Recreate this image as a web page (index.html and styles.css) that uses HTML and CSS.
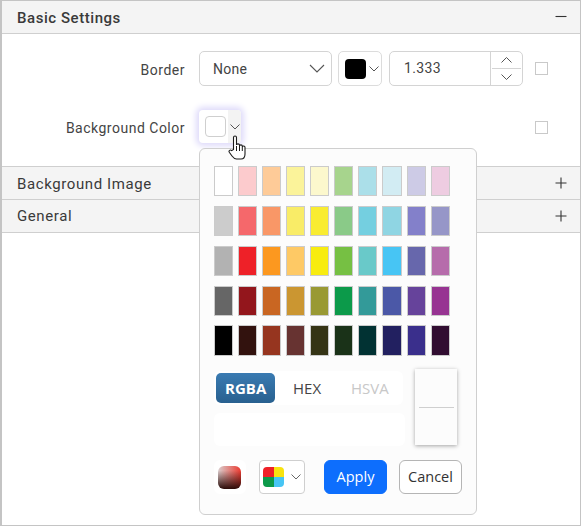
FILE: index.html
```html
<!DOCTYPE html>
<html lang="en">
<head>
<meta charset="utf-8">
<title>Basic Settings</title>
<link rel="stylesheet" href="styles.css">
</head>
<body>
<div class="frame">
  <div class="section-head open"><span class="head-text">Basic Settings</span><svg class="pm" width="12" height="12" viewBox="0 0 12 12"><path d="M.5 5.500h11" stroke="#333" stroke-width="1.100"/></svg></div>
  <div class="body-panel">
    <div class="row row-border">
      <label class="lbl">Border</label>
      <div class="select"><span>None</span><svg width="16" height="9" viewBox="0 0 16 9"><path d="M1 1l7 7 7-7" fill="none" stroke="#555" stroke-width="1.100"/></svg></div>
      <div class="color-pick"><span class="chip black"></span><svg width="10" height="6" viewBox="0 0 10 6"><path d="M.5.5 5 5 9.500.5" fill="none" stroke="#555"/></svg></div>
      <div class="num"><span class="num-val">1.333</span><div class="spin"><div class="spin-btn"><svg width="11" height="6" viewBox="0 0 11 6"><path d="M.5 5.500l5-5 5 5" fill="none" stroke="#555"/></svg></div><div class="spin-btn"><svg width="11" height="6" viewBox="0 0 11 6"><path d="M.5.5l5 5 5-5" fill="none" stroke="#555"/></svg></div></div></div>
      <span class="check"></span>
    </div>
    <div class="row row-bg">
      <label class="lbl">Background Color</label>
      <div class="color-focus"><span class="chip white"></span><span class="caret-zone"><svg width="10" height="6" viewBox="0 0 10 6"><path d="M.5.5 5 5 9.500.5" fill="none" stroke="#555"/></svg></span></div>
      <span class="check check-end"></span>
    </div>
  </div>
  <div class="section-head"><span class="thin head-text">Background Image</span><svg class="pm" width="12" height="12" viewBox="0 0 12 12"><path d="M.5 6h11M6 .5v11" stroke="#333" stroke-width="1.100"/></svg></div>
  <div class="section-head"><span class="thin">General</span><svg class="pm" width="12" height="12" viewBox="0 0 12 12"><path d="M.5 6h11M6 .5v11" stroke="#333" stroke-width="1.100"/></svg></div>

  <div class="popup">
    <div class="palette">
      <i style="background:#fff"></i><i style="background:#fccbcd"></i><i style="background:#fecb98"></i><i style="background:#fbf39a"></i><i style="background:#fcf8cd"></i><i style="background:#a7d48d"></i><i style="background:#abdfe9"></i><i style="background:#d2ecf3"></i><i style="background:#cdcbe6"></i><i style="background:#eecce1"></i>
      <i style="background:#cccccc"></i><i style="background:#f5686b"></i><i style="background:#f99767"></i><i style="background:#f9ec67"></i><i style="background:#f9ec31"></i><i style="background:#8aca88"></i><i style="background:#74cfe0"></i><i style="background:#8fd5e3"></i><i style="background:#8380ca"></i><i style="background:#9696c8"></i>
      <i style="background:#b2b2b2"></i><i style="background:#ee2128"></i><i style="background:#fc981f"></i><i style="background:#fec965"></i><i style="background:#f8ec0f"></i><i style="background:#76c043"></i><i style="background:#69c9c9"></i><i style="background:#47c5f4"></i><i style="background:#6767ac"></i><i style="background:#b66cab"></i>
      <i style="background:#666666"></i><i style="background:#93161c"></i><i style="background:#c96622"></i><i style="background:#cb9631"></i><i style="background:#999933"></i><i style="background:#0c9a4a"></i><i style="background:#339a99"></i><i style="background:#4b58a7"></i><i style="background:#66439b"></i><i style="background:#973492"></i>
      <i style="background:#000000"></i><i style="background:#32120e"></i><i style="background:#96351f"></i><i style="background:#673331"></i><i style="background:#353415"></i><i style="background:#1a3218"></i><i style="background:#013233"></i><i style="background:#222060"></i><i style="background:#3a2f8c"></i><i style="background:#310d31"></i>
    </div>
    <div class="mode-area">
      <div class="mode-col">
        <div class="tabs"><span class="tab active">RGBA</span><span class="tab hex">HEX</span><span class="tab muted">HSVA</span></div>
        <div class="inputs"></div>
      </div>
      <div class="preview"><span class="preview-line"></span></div>
    </div>
    <div class="actions">
      <div class="grad-btn"><span class="grad"></span></div>
      <div class="pal-btn"><span class="quad"><b class="q1"></b><b class="q2"></b><b class="q3"></b><b class="q4"></b></span><svg width="10" height="6" viewBox="0 0 10 6"><path d="M.5.5 5 5 9.500.5" fill="none" stroke="#666"/></svg></div>
      <button class="btn apply">Apply</button>
      <button class="btn cancel">Cancel</button>
    </div>
  </div>

  <svg class="cursor" width="19" height="25" viewBox="0 0 19 25"><path d="M5.500 14.500V2.500c0-2 3-2 3 0V10c0-1.500 3-1.500 3 0v1c0-1.500 2.800-1.500 2.800 0v1c0-1.300 2.700-1.300 2.700.3V19c0 3-1.700 5-4 5H8.500C6.500 24 5.500 23 4 21L1.300 17.300c-1-1.600 1-3 2.400-1.700z" fill="#fff" stroke="#1a1a1a" stroke-width="1.100"/><path d="M8.500 11v5M11.500 11v5M14.300 12v4" stroke="#1a1a1a" fill="none"/></svg>
</div>
</body>
</html>
```
FILE: styles.css
```css
* { box-sizing: border-box; }
html, body { margin: 0; height: 100%; background: #fff; }
body { font-family: Roboto, sans-serif; color: #333; }

.frame {
  position: relative;
  width: 581px;
  height: 526px;
  border: 2px solid #c4c4c4;
  border-width: 1px 1px 1px 2px;
  overflow: hidden;
}

.section-head {
  display: flex;
  align-items: center;
  justify-content: space-between;
  height: 33px;
  padding: 0 13px 0 15px;
  background: #f4f4f4;
  border-bottom: 1px solid #cfcfcf;
  font-size: 15px;
  letter-spacing: 0.6px;
  color: #3a3a3a;
}
.section-head.open { font-weight: 500; letter-spacing: 0.55px; }
.head-text { padding-top: 1px; }
.thin { font-weight: 400; }

.body-panel { height: 133px; padding-top: 17px; border-bottom: 1px solid #cfcfcf; }

.row { display: flex; align-items: center; }
.row-border { height: 35px; }
.row-bg { height: 33px; margin-top: 24px; }

.lbl {
  width: 183px;
  margin-right: 14px;
  padding-top: 2px;
  text-align: right;
  font-size: 14px;
  letter-spacing: 0.5px;
  color: #444;
}

.select {
  display: flex;
  align-items: center;
  justify-content: space-between;
  width: 133px;
  height: 35px;
  padding: 0 6px 0 13px;
  border: 1px solid #d4d4d4;
  border-radius: 5px;
  font-size: 14px;
  letter-spacing: 0.3px;
  color: #444;
}

.color-pick {
  display: flex;
  align-items: center;
  gap: 3px;
  width: 44px;
  height: 35px;
  margin-left: 6px;
  padding-left: 6px;
  border: 1px solid #dcdcdc;
  border-radius: 5px;
}

.chip { display: block; flex: none; width: 21px; height: 21px; border-radius: 4px; }
.chip.black { background: #000; height: 20px; }
.chip.white { background: #fff; border: 1px solid #cfcfcf; }

.num {
  display: flex;
  width: 134px;
  height: 35px;
  margin-left: 7px;
  border: 1px solid #d4d4d4;
  border-radius: 5px;
}
.num-val {
  flex: 1;
  padding-left: 14px;
  font-size: 14px;
  line-height: 33px;
  letter-spacing: 0.35px;
  color: #444;
  border-right: 1px solid #d4d4d4;
}
.spin { display: flex; flex-direction: column; width: 31px; }
.spin-btn { display: flex; flex: 1; align-items: center; justify-content: center; }
.spin-btn + .spin-btn { border-top: 1px solid #d4d4d4; margin-left: 1px; margin-right: 1px; }

.check {
  display: block;
  width: 13px;
  height: 13px;
  margin-left: 12px;
  border: 1px solid #c9c9c9;
}
.check-end { margin-left: 294px; margin-top: 2px; }

.color-focus {
  display: flex;
  align-items: center;
  width: 42px;
  height: 33px;
  padding-left: 6px;
  border-radius: 4px;
  background: #fff;
  box-shadow: 0 0 6px 3px #dedafa;
}
.caret-zone {
  display: flex;
  flex: none;
  align-items: center;
  justify-content: center;
  width: 13px;
  height: 33px;
  margin-left: 2px;
  background: #f3f3f3;
  border-radius: 0 4px 4px 0;
}

.popup {
  position: absolute;
  left: 197px;
  top: 147px;
  width: 278px;
  height: 367px;
  padding: 17px 14px 0;
  background: #fcfcfc;
  border: 1px solid #cfcfcf;
  border-radius: 6px;
}

.palette {
  display: grid;
  grid-template-columns: repeat(7, 19px) 20px 19px 19px;
  grid-auto-rows: 30px;
  column-gap: 5px;
  row-gap: 10px;
}
.palette i { display: block; border: 1px solid #cbcbcb; }
.palette i:nth-child(n+41) { margin-top: -1px; }

.mode-area { display: flex; gap: 10px; margin-top: 13px; height: 77px; }
.mode-col { width: 191px; padding-top: 2px; }
.tabs {
  display: flex;
  width: 189px;
  height: 34px;
  padding: 2px;
  background: #fff;
  border-radius: 6px;
  font-family: "Open Sans", sans-serif;
  font-size: 15px;
}
.tab {
  display: flex;
  align-items: center;
  justify-content: center;
  width: 63px;
  color: #444;
}
.tab.active {
  width: 60px;
  font-weight: 700;
  color: #fff;
  background: linear-gradient(#3a7bb2, #28608f);
  border-radius: 5px;
}
.tab.hex { width: 64px; }
.tab.muted { color: #c8c8c8; }
.inputs { height: 33px; margin-top: 8px; background: #fff; border-radius: 6px; }

.preview {
  display: flex;
  align-items: center;
  justify-content: center;
  width: 42px;
  height: 76px;
  background: #fcfcfc;
  box-shadow: 0 1px 4px rgba(0, 0, 0, 0.35);
}
.preview-line { display: block; width: 35px; height: 1px; background: #cfcfcf; }

.actions { display: flex; align-items: center; margin-top: 14px; height: 34px; }
.grad-btn {
  display: flex;
  align-items: center;
  justify-content: center;
  width: 32px;
  height: 34px;
  padding-right: 1px;
  background: #fff;
  border-radius: 6px;
}
.grad {
  display: block;
  width: 23px;
  height: 23px;
  border-radius: 6px;
  background: linear-gradient(to top, #2a0b08, rgba(42, 11, 8, 0) 80%), linear-gradient(to right, #d9cdcd, #ea3a30);
  filter: blur(0.5px);
}
.pal-btn {
  display: flex;
  align-items: center;
  gap: 7px;
  width: 46px;
  height: 34px;
  margin-left: 13px;
  padding-left: 3px;
  background: #fff;
  border: 1px solid #cfcfcf;
  border-radius: 4px;
}
.quad {
  display: grid;
  grid-template-columns: 10.500px 10.500px;
  grid-template-rows: 10px 10px;
  border-radius: 4px;
  overflow: hidden;
}
.q1 { background: #ee2128; }
.q2 { background: #f8e30f; }
.q3 { background: #0c9a4a; }
.q4 { background: #47c5f4; }

.btn {
  width: 63px;
  height: 34px;
  padding: 0 0 2px;
  border-radius: 6px;
  font-family: "Open Sans", sans-serif;
  font-size: 14.500px;
}
.apply { margin-left: 19px; background: #0d6efd; border: 1px solid #0d6efd; color: #fff; }
.cancel { margin-left: 12px; background: #fff; border: 1px solid #b5b5b5; color: #333; }

.cursor { position: absolute; left: 226px; top: 134px; }
```
